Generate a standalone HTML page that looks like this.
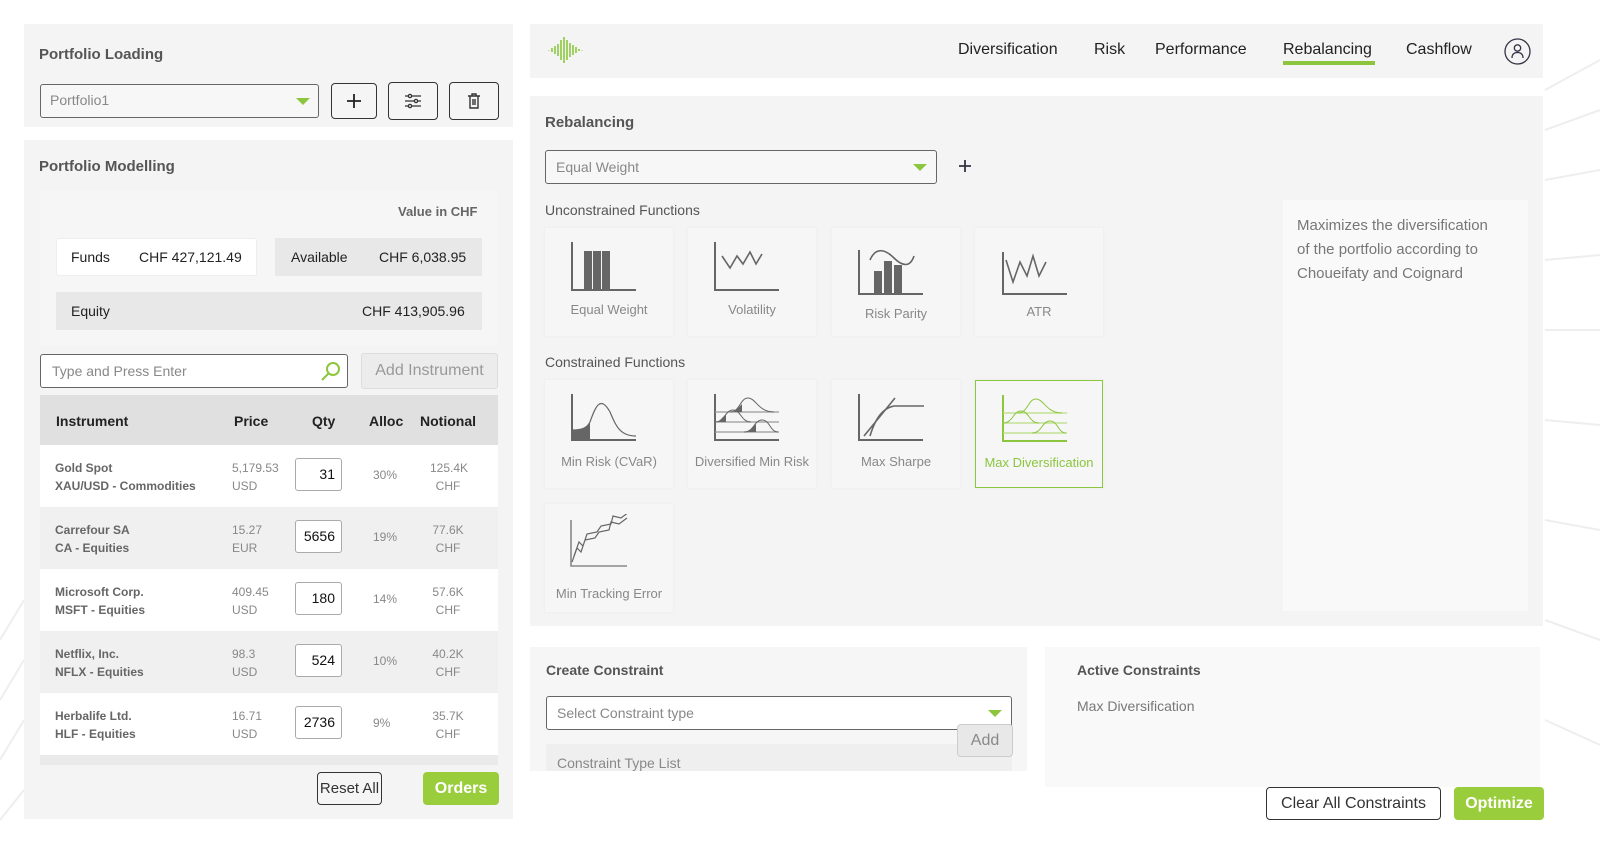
<!DOCTYPE html>
<html><head><meta charset="utf-8"><style>
*{box-sizing:border-box;margin:0;padding:0}
body{width:1600px;height:860px;background:#fff;font-family:"Liberation Sans",sans-serif;position:relative;overflow:hidden;color:#555}
.a{position:absolute}
.panel{background:#f4f4f4}
.t{font-weight:bold;font-size:15px;color:#555}
.box{border:1px solid #666;border-radius:3px;background:#f7f7f7}
.tri{position:absolute;width:0;height:0;border-left:7px solid transparent;border-right:7px solid transparent;border-top:7px solid #8cc63f}
.btn{border:1px solid #333;border-radius:4px;background:#f5f5f5;display:flex;align-items:center;justify-content:center;white-space:nowrap}
.card{position:absolute;width:128px;height:108px;background:#f6f6f6;box-shadow:0 0 4px rgba(0,0,0,.05);text-align:center;font-size:13px;color:#888}
.card svg{position:absolute;left:24px;top:10px}
.card span{position:absolute;left:0;right:0;top:74px}
.row{position:absolute;left:40px;width:458px;height:62px;font-size:12px}
.row .n{position:absolute;left:15px;top:14px;line-height:18px;font-weight:bold;color:#666}
.row .p{position:absolute;left:192px;top:14px;line-height:18px;color:#888}
.row .q{position:absolute;left:255px;top:13px;width:47px;height:33px;border:1px solid #aaa;border-radius:3px;background:#fff;text-align:right;padding-right:6px;line-height:31px;font-size:14px;color:#111}
.row .al{position:absolute;left:333px;top:23px;color:#888}
.row .no{position:absolute;left:390px;width:36px;top:14px;line-height:18px;color:#888;text-align:center}
.nav{position:absolute;top:41px;font-size:16px;color:#222}
</style></head><body>
<svg class="a" style="left:0;top:0" width="1600" height="860"><g stroke="#eee" stroke-width="2" fill="none">
<path d="M0 640 L24 600 M0 700 L24 660 M0 760 L24 720 M0 820 L24 790"/>
<path d="M1545 90 L1600 60 M1545 130 L1600 110 M1545 180 L1600 170 M1545 260 L1600 255 M1545 330 L1600 330 M1545 420 L1600 425 M1545 520 L1600 530 M1545 620 L1600 640 M1545 720 L1600 745"/>
</g></svg>

<div class="a panel" style="left:24px;top:24px;width:489px;height:103px"></div>
<div class="a t" style="left:39px;top:46px">Portfolio Loading</div>
<div class="a box" style="left:40px;top:84px;width:279px;height:34px"></div>
<div class="a" style="left:50px;top:92px;font-size:14px;color:#888">Portfolio1</div>
<div class="tri" style="left:296px;top:98px"></div>
<div class="a btn" style="left:331px;top:83px;width:46px;height:36px"><svg width="16" height="16"><path d="M8 1v14M1 8h14" stroke="#222" stroke-width="1.8"/></svg></div>
<div class="a btn" style="left:388px;top:82px;width:50px;height:38px"><svg width="18" height="16" stroke="#333" stroke-width="1.3" fill="none"><path d="M1 3h16M1 8h16M1 13h16"/><circle cx="6" cy="3" r="1.6" fill="#f5f5f5"/><circle cx="12" cy="8" r="1.6" fill="#f5f5f5"/><circle cx="6" cy="13" r="1.6" fill="#f5f5f5"/></svg></div>
<div class="a btn" style="left:449px;top:82px;width:50px;height:38px"><svg width="14" height="16" stroke="#333" stroke-width="1.4" fill="none"><path d="M1 3h12M5 3V1h4v2M3 3v12h8V3M6 6v6M8 6v6"/></svg></div>

<div class="a panel" style="left:24px;top:140px;width:489px;height:679px"></div>
<div class="a t" style="left:39px;top:158px">Portfolio Modelling</div>
<div class="a" style="left:40px;top:190px;width:458px;height:156px;background:#f6f6f6"></div>
<div class="a" style="left:398px;top:204px;font-size:13px;font-weight:bold;color:#666">Value in CHF</div>
<div class="a" style="left:56px;top:238px;width:201px;height:38px;background:#fff;border:1px solid #eee;border-radius:3px"></div>
<div class="a" style="left:71px;top:249px;font-size:14px;color:#222">Funds</div>
<div class="a" style="left:139px;top:249px;font-size:14px;color:#222">CHF 427,121.49</div>
<div class="a" style="left:275px;top:238px;width:207px;height:38px;background:#e8e8e8"></div>
<div class="a" style="left:291px;top:249px;font-size:14px;color:#222">Available</div>
<div class="a" style="left:379px;top:249px;font-size:14px;color:#222">CHF 6,038.95</div>
<div class="a" style="left:56px;top:292px;width:426px;height:38px;background:#e8e8e8"></div>
<div class="a" style="left:71px;top:303px;font-size:14px;color:#222">Equity</div>
<div class="a" style="left:362px;top:303px;font-size:14px;color:#222">CHF 413,905.96</div>
<div class="a" style="left:40px;top:354px;width:308px;height:34px;background:#fff;border:1px solid #666;border-radius:3px"></div>
<div class="a" style="left:52px;top:363px;font-size:14px;color:#888">Type and Press Enter</div>
<svg class="a" style="left:320px;top:361px" width="22" height="20" fill="none" stroke="#8cc63f" stroke-width="2"><circle cx="13" cy="8" r="6"/><path d="M9 12L2 19"/></svg>
<div class="a" style="left:361px;top:353px;width:137px;height:36px;background:#ececec;border:1px solid #ddd;border-radius:3px;text-align:center;line-height:34px;font-size:16px;color:#999">Add Instrument</div>
<div class="a" style="left:40px;top:395px;width:458px;height:50px;background:#e0e0e0;font-size:14px;font-weight:bold;color:#222">
<span class="a" style="left:16px;top:18px">Instrument</span><span class="a" style="left:194px;top:18px">Price</span><span class="a" style="left:272px;top:18px">Qty</span><span class="a" style="left:329px;top:18px">Alloc</span><span class="a" style="left:380px;top:18px">Notional</span></div>
<div class="row" style="top:445px;background:#fff"><div class="n">Gold Spot<br>XAU/USD - Commodities</div><div class="p">5,179.53<br>USD</div><div class="q">31</div><div class="al">30%</div><div class="no">125.4K<br>CHF</div></div>
<div class="row" style="top:507px;background:#f0f0f0"><div class="n">Carrefour SA<br>CA - Equities</div><div class="p">15.27<br>EUR</div><div class="q">5656</div><div class="al">19%</div><div class="no">77.6K<br>CHF</div></div>
<div class="row" style="top:569px;background:#fff"><div class="n">Microsoft Corp.<br>MSFT - Equities</div><div class="p">409.45<br>USD</div><div class="q">180</div><div class="al">14%</div><div class="no">57.6K<br>CHF</div></div>
<div class="row" style="top:631px;background:#f0f0f0"><div class="n">Netflix, Inc.<br>NFLX - Equities</div><div class="p">98.3<br>USD</div><div class="q">524</div><div class="al">10%</div><div class="no">40.2K<br>CHF</div></div>
<div class="row" style="top:693px;background:#fff"><div class="n">Herbalife Ltd.<br>HLF - Equities</div><div class="p">16.71<br>USD</div><div class="q">2736</div><div class="al">9%</div><div class="no">35.7K<br>CHF</div></div>
<div class="a" style="left:40px;top:755px;width:458px;height:10px;background:#eaeaea"></div>
<div class="a btn" style="left:317px;top:772px;width:65px;height:33px;font-size:15px;color:#333">Reset All</div>
<div class="a" style="left:423px;top:772px;width:76px;height:33px;background:#9acd3c;border-radius:4px;color:#fff;font-size:16px;font-weight:bold;text-align:center;line-height:33px">Orders</div>

<div class="a panel" style="left:530px;top:24px;width:1013px;height:54px"></div>
<svg class="a" style="left:548px;top:36px" width="40" height="28" stroke="#8cc63f" stroke-width="1.6"><path d="M1 14v0.5M4 12v4M7 10v8M10 8v12M13 4v20M16 1v26M19 4v20M22 7v14M25 9v10M28 11v6M31 13v2M34 14v0.5"/></svg>
<div class="nav" style="left:958px">Diversification</div>
<div class="nav" style="left:1094px">Risk</div>
<div class="nav" style="left:1155px">Performance</div>
<div class="nav" style="left:1283px">Rebalancing</div>
<div class="a" style="left:1283px;top:61px;width:92px;height:4px;background:#8cc63f"></div>
<div class="nav" style="left:1406px">Cashflow</div>
<svg class="a" style="left:1504px;top:38px" width="27" height="27" fill="none" stroke="#334" stroke-width="1.3"><circle cx="13.5" cy="13.5" r="12.5"/><circle cx="13.5" cy="10" r="3.2"/><path d="M8 20c0-4 2.5-5.5 5.5-5.5s5.5 1.5 5.5 5.5"/></svg>

<div class="a panel" style="left:530px;top:96px;width:1013px;height:530px"></div>
<div class="a t" style="left:545px;top:114px">Rebalancing</div>
<div class="a box" style="left:545px;top:150px;width:392px;height:34px"></div>
<div class="a" style="left:556px;top:159px;font-size:14px;color:#888">Equal Weight</div>
<div class="tri" style="left:913px;top:164px"></div>
<svg class="a" style="left:958px;top:159px" width="14" height="14"><path d="M7 1v12M1 7h12" stroke="#334" stroke-width="1.8"/></svg>
<div class="a" style="left:545px;top:202px;font-size:14px;color:#555">Unconstrained Functions</div>
<div class="a" style="left:545px;top:354px;font-size:14px;color:#555">Constrained Functions</div>

<div class="card" style="left:545px;top:228px"><svg width="80" height="60" fill="none" stroke="#666" stroke-width="2"><path d="M3 4v48h64"/><rect x="16" y="14" width="6" height="38" fill="#666"/><rect x="25" y="14" width="6" height="38" fill="#666"/><rect x="34" y="14" width="6" height="38" fill="#666"/></svg><span>Equal Weight</span></div>
<div class="card" style="left:688px;top:228px"><svg width="80" height="60" fill="none" stroke="#666" stroke-width="2"><path d="M3 4v48h64"/><path d="M10 18l8 12 7-12 6 8 7-12 6 12 6-10" stroke-width="1.6"/></svg><span>Volatility</span></div>
<div class="card" style="left:832px;top:228px"><svg width="80" height="66" fill="none" stroke="#666" stroke-width="2"><path d="M3 12v44h64"/><rect x="19" y="34" width="6" height="22" fill="#666"/><rect x="29" y="24" width="6" height="32" fill="#666"/><rect x="39" y="28" width="6" height="28" fill="#666"/><path d="M14 22c6-14 16-10 24-2s16 10 20-2" stroke-width="1.6"/></svg><span style="top:78px">Risk Parity</span></div>
<div class="card" style="left:975px;top:228px"><svg width="80" height="66" fill="none" stroke="#666" stroke-width="2"><path d="M4 14v42h64"/><path d="M7 22l7 22 7-20 7 14 6-20 6 20 7-14" stroke-width="1.6"/></svg><span style="top:76px">ATR</span></div>

<div class="card" style="left:545px;top:380px"><svg width="80" height="60" fill="none" stroke="#666" stroke-width="2"><path d="M3 4v46h64"/><path d="M3 40c10 0 15-2 18-8 5-14 10-28 20-10 6 14 10 24 26 24" stroke-width="1.2"/><path d="M3 40c10 0 15-2 18-8v18H3z" fill="#666" stroke="none"/></svg><span>Min Risk (CVaR)</span></div>
<div class="card" style="left:688px;top:380px"><svg width="80" height="60" fill="none" stroke="#666" stroke-width="2"><path d="M3 4v46h64"/><path d="M3 22h64M3 32h64M3 42h64" stroke="#999" stroke-width="1.2"/><path d="M3 32c10 0 10-12 18-12 8 0 8 12 18 12M18 22c10 0 10-14 18-14s10 14 26 14M32 42c10 0 10-12 18-12s8 12 16 12" stroke-width="1"/><path d="M6 32l8-8v8zM22 22l8-8v8zM36 42l8-8v8z" fill="#666" stroke="none"/></svg><span>Diversified Min Risk</span></div>
<div class="card" style="left:832px;top:380px"><svg width="80" height="60" fill="none" stroke="#666" stroke-width="2"><path d="M3 4v46h64"/><path d="M8 46L39 8M14 46c6-20 14-28 24-30h30" stroke-width="1.6"/></svg><span>Max Sharpe</span></div>
<div class="card" style="left:975px;top:380px;border:1px solid #8cc63f;color:#8cc63f"><svg width="80" height="60" fill="none" stroke="#8cc63f" stroke-width="2"><path d="M3 4v46h64"/><path d="M3 22h64M3 32h64M3 42h64" stroke="#b8dc80" stroke-width="1.2"/><path d="M3 32c10 0 10-12 18-12 8 0 8 12 18 12M18 22c10 0 10-14 18-14s10 14 26 14M32 42c10 0 10-12 18-12s8 12 16 12" stroke-width="1"/></svg><span>Max Diversification</span></div>
<div class="card" style="left:545px;top:504px"><svg width="80" height="60" fill="none" stroke="#666" stroke-width="1.2"><path d="M2 6v46h56" stroke="#888" stroke-width="1.6"/><path d="M5 42l5-14 4 4 4-12 10-2 4-6 10-2 2-8 8 2 8-6M3 48l5-14 4 4 4-12 10-2 4-6 10-2 2-8 8 2 8-6"/></svg><span style="top:82px">Min Tracking Error</span></div>

<div class="a" style="left:1283px;top:200px;width:245px;height:411px;background:#f9f9f9"></div>
<div class="a" style="left:1297px;top:214px;font-size:15px;line-height:24px;color:#777">Maximizes the diversification<br>of the portfolio according to<br>Choueifaty and Coignard</div>

<div class="a" style="left:530px;top:647px;width:497px;height:124px;background:#f6f6f6"></div>
<div class="a t" style="left:546px;top:662px;font-size:14px">Create Constraint</div>
<div class="a" style="left:546px;top:696px;width:466px;height:34px;background:#fff;border:1px solid #666;border-radius:3px"></div>
<div class="a" style="left:557px;top:705px;font-size:14px;color:#888">Select Constraint type</div>
<div class="tri" style="left:988px;top:710px"></div>
<div class="a" style="left:546px;top:744px;width:466px;height:27px;background:#efefef"></div>
<div class="a" style="left:557px;top:755px;font-size:14px;color:#888">Constraint Type List</div>
<div class="a" style="left:957px;top:724px;width:56px;height:33px;background:#e8e8e8;border:1px solid #ccc;border-radius:4px;text-align:center;line-height:31px;font-size:16px;color:#888">Add</div>
<div class="a" style="left:1045px;top:647px;width:495px;height:140px;background:#f9f9f9"></div>
<div class="a" style="left:1077px;top:662px;font-size:14px;font-weight:bold;color:#555">Active Constraints</div>
<div class="a" style="left:1077px;top:698px;font-size:14px;color:#777">Max Diversification</div>
<div class="a" style="left:1266px;top:787px;width:175px;height:33px;border:1px solid #333;border-radius:4px;background:#fff;text-align:center;line-height:31px;font-size:16px;color:#333">Clear All Constraints</div>
<div class="a" style="left:1454px;top:787px;width:90px;height:33px;background:#9acd3c;border-radius:4px;color:#fff;font-size:16px;font-weight:bold;text-align:center;line-height:33px">Optimize</div>
</body></html>
